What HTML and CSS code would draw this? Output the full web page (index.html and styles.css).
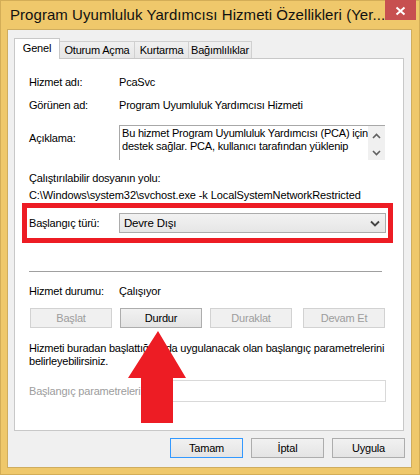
FILE: index.html
```html
<!DOCTYPE html>
<html lang="tr">
<head>
<meta charset="utf-8">
<title>Program Uyumluluk Yardımcısı Hizmeti Özellikleri</title>
<link rel="stylesheet" href="styles.css">
</head>
<body>
<div class="window">
  <div class="titlebar">
    <span class="title">Program Uyumluluk Yardımcısı Hizmeti Özellikleri (Yer...</span>
    <div class="close">
      <svg width="31" height="20" viewBox="0 0 31 20"><path d="M11.5 7.5 L19.5 14.5 M19.5 7.5 L11.5 14.5" stroke="#fff" stroke-width="2" fill="none"/></svg>
    </div>
  </div>
  <div class="client">
    <div class="tabs">
      <div class="tab active">Genel</div>
      <div class="tab t2">Oturum Açma</div>
      <div class="tab t3">Kurtarma</div>
      <div class="tab t4">Bağımlılıklar</div>
    </div>
    <div class="panel">
      <div class="row r1"><span class="label">Hizmet adı:</span><span>PcaSvc</span></div>
      <div class="row r2"><span class="label">Görünen ad:</span><span>Program Uyumluluk Yardımcısı Hizmeti</span></div>
      <div class="desc-row">
        <span class="label desc-label">Açıklama:</span>
        <div class="textarea">
          <div class="ta-text">Bu hizmet Program Uyumluluk Yardımcısı (PCA) için<br>destek sağlar. PCA, kullanıcı tarafından yüklenip</div>
          <div class="scroll">
            <svg width="17" height="34" viewBox="0 0 17 34"><path d="M5 12 L8.5 8.5 L12 12" stroke="#606060" stroke-width="1.6" fill="none"/><path d="M5 25 L8.5 28.5 L12 25" stroke="#606060" stroke-width="1.6" fill="none"/></svg>
          </div>
        </div>
      </div>
      <div class="line l1">Çalıştırılabilir dosyanın yolu:</div>
      <div class="line path">C:\Windows\system32\svchost.exe -k LocalSystemNetworkRestricted</div>
      <div class="redbox">
        <span class="label">Başlangıç türü:</span>
        <div class="combo"><span>Devre Dışı</span>
          <svg width="10" height="7" viewBox="0 0 10 7"><path d="M1 1.5 L5 5.5 L9 1.5" stroke="#444" stroke-width="1.8" fill="none"/></svg>
        </div>
      </div>
      <div class="sep"></div>
      <div class="row r3"><span class="label">Hizmet durumu:</span><span>Çalışıyor</span></div>
      <div class="btnrow">
        <div class="btn disabled">Başlat</div>
        <div class="btn">Durdur</div>
        <div class="btn disabled">Duraklat</div>
        <div class="btn disabled last">Devam Et</div>
      </div>
      <p class="para">Hizmeti buradan başlattığınızda uygulanacak olan başlangıç parametrelerini<br>belirleyebilirsiniz.</p>
      <div class="paramrow">
        <span class="plabel">Başlangıç parametreleri:</span>
        <div class="pinput"></div>
      </div>
    </div>
    <div class="footer">
      <div class="fbtn default">Tamam</div>
      <div class="fbtn">İptal</div>
      <div class="fbtn">Uygula</div>
    </div>
  </div>
  <svg class="arrow" width="62" height="96" viewBox="0 0 62 96">
    <polygon points="32,2 60,49 47,49 47,94 15,94 15,49 2,49" fill="#ed1c24"/>
  </svg>
</div>
</body>
</html>
```
FILE: styles.css
```css
* { box-sizing: border-box; }
body {
  margin: 0;
  font-family: "Segoe UI", "Liberation Sans", Arial, sans-serif;
  font-size: 11px;
  letter-spacing: -0.2px;
  color: #000;
}
.window {
  position: relative;
  width: 420px;
  height: 475px;
  background: #efc86b;
  box-shadow: inset 0 0 0 1px #d3ad57;
}
.titlebar {
  display: flex;
  height: 29px;
}
.title {
  padding-left: 10px;
  font-size: 15px;
  line-height: 30px;
  letter-spacing: 0.05px;
  white-space: nowrap;
  color: #111;
}
.close {
  margin-left: auto;
  margin-right: 7px;
  width: 31px;
  height: 20px;
  background: #c75050;
}
.close svg { display: block; }
.client {
  margin-left: 7px;
  width: 405px;
  height: 439px;
  border: 1px solid #cfad5f;
  background: #f0f0f0;
  padding: 8px 6px 0 6px;
}
.tabs {
  display: flex;
  align-items: flex-end;
  height: 20px;
}
.tab {
  height: 17px;
  border: 1px solid #d0d0d0;
  border-bottom: none;
  background: linear-gradient(#f0f0f0, #e6e6e6);
  text-align: center;
  line-height: 16px;
  margin-left: -1px;
  white-space: nowrap;
}
.tab.active {
  position: relative;
  z-index: 1;
  height: 21px;
  margin-bottom: -1px;
  margin-left: 0;
  width: 46px;
  background: #fff;
  line-height: 19px;
  border-color: #c8c8c8;
}
.t2 { width: 76px; }
.t3 { width: 55px; }
.t4 { width: 64px; }
.panel {
  width: 390px;
  height: 373px;
  border: 1px solid #c8c8c8;
  background: #fff;
  padding: 15px 0 0 14px;
}
.row {
  display: flex;
  height: 16px;
  line-height: 16px;
  white-space: nowrap;
}
.label {
  flex: none;
  width: 90px;
}
.r2 { margin-top: 7px; }
.desc-row {
  display: flex;
  margin-top: 12px;
  height: 35px;
}
.desc-label { padding-top: 5px; line-height: 16px; }
.textarea {
  display: flex;
  width: 266px;
  height: 35px;
  border-top: 1px solid #a8a8a8;
  border-left: 1px solid #a8a8a8;
}
.ta-text {
  flex: 1;
  padding: 1px 0 0 2px;
  line-height: 13px;
  white-space: nowrap;
}
.scroll {
  width: 17px;
  background: #f0f0f0;
}
.scroll svg { display: block; }
.line {
  height: 17px;
  line-height: 17px;
  white-space: nowrap;
}
.path { letter-spacing: -0.1px; }
.l1 { margin-top: 10px; }
.redbox {
  display: flex;
  align-items: center;
  margin-top: -1px;
  margin-left: -7px;
  width: 371px;
  height: 40px;
  border: 5px solid #ed1c24;
  padding: 0 2px;
}
.combo {
  display: flex;
  align-items: center;
  justify-content: space-between;
  width: 267px;
  height: 20px;
  border: 1px solid #acacac;
  background: linear-gradient(#f2f2f2, #e6e6e6);
  padding: 0 5px 0 4px;
  font-size: 11.5px;
}
.combo svg { display: block; }
.sep {
  margin-top: 28px;
  width: 353px;
  height: 1px;
  background: #a0a0a0;
}
.r3 { margin-top: 11px; }
.btnrow {
  display: flex;
  margin-top: 9px;
  margin-left: 1px;
  gap: 8px;
}
.btn {
  width: 82px;
  height: 20px;
  border: 1px solid #adadad;
  background: linear-gradient(#f1f1f1, #e4e4e4);
  text-align: center;
  line-height: 18px;
}
.btn.disabled {
  border-color: #d2d2d2;
  background: #f0f0f0;
  color: #9d9d9d;
}
.btn.last { margin-left: 3px; }
.para {
  margin: 14px 0 0 0;
  line-height: 13px;
  white-space: nowrap;
}
.paramrow {
  display: flex;
  align-items: center;
  margin-top: 12px;
  width: 357px;
  height: 22px;
}
.plabel {
  color: #9d9d9d;
  white-space: nowrap;
}
.pinput {
  margin-left: auto;
  width: 243px;
  height: 22px;
  border: 1px solid #d9d9d9;
  background: #fff;
}
.footer {
  display: flex;
  justify-content: flex-end;
  gap: 8px;
  margin-top: 7px;
}
.fbtn {
  width: 73px;
  height: 20px;
  border: 1px solid #adadad;
  background: linear-gradient(#f1f1f1, #e4e4e4);
  text-align: center;
  line-height: 18px;
}
.fbtn.default {
  border-color: #3399ff;
}
.arrow {
  position: absolute;
  left: 126px;
  top: 329px;
  display: block;
}
```
